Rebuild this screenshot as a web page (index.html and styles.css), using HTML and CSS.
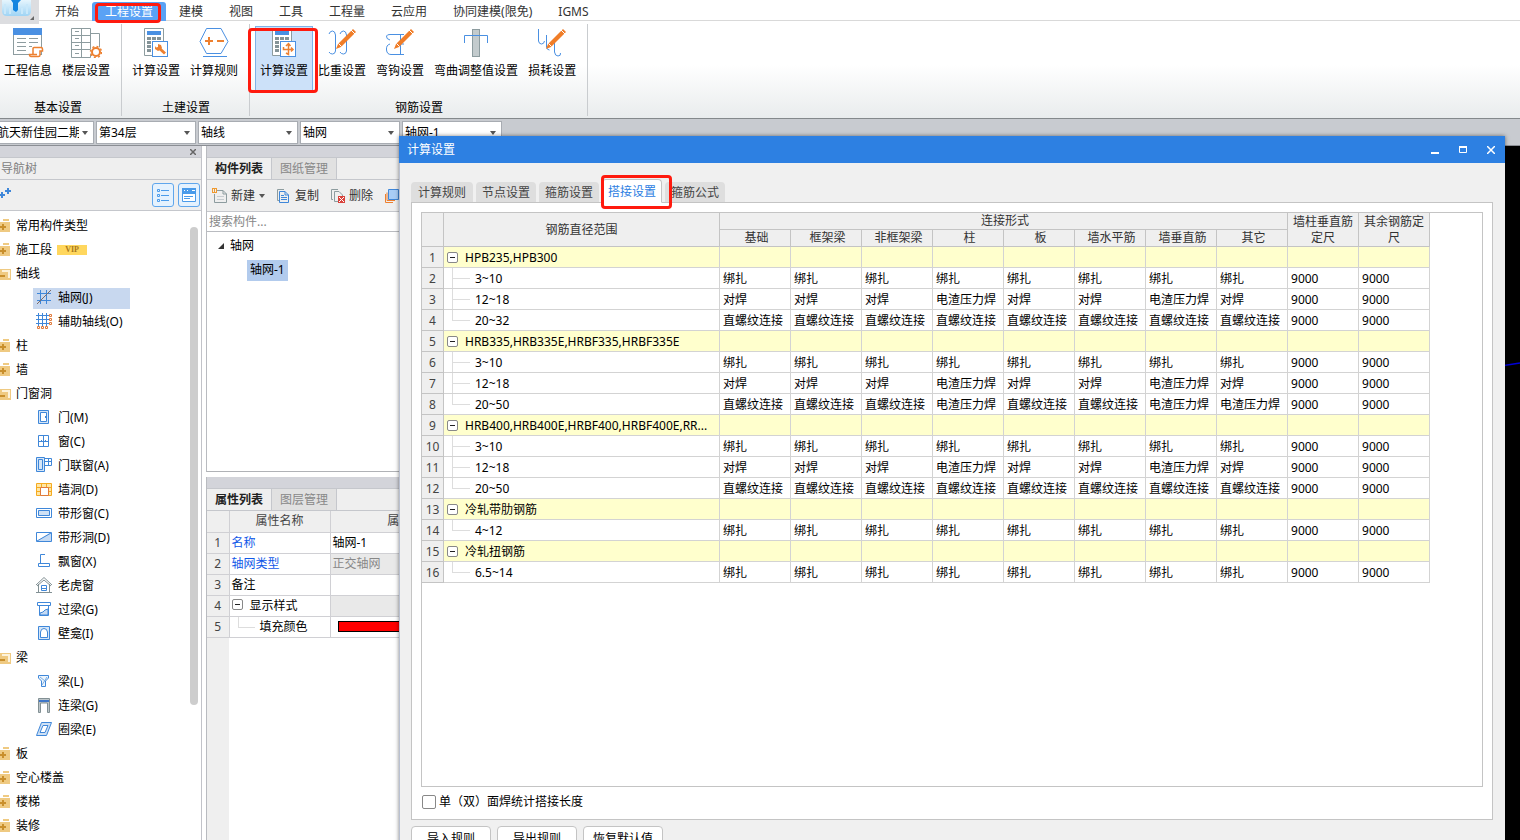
FILE: index.html
```html
<!DOCTYPE html>
<html lang="zh-CN">
<head>
<meta charset="utf-8">
<title>计算设置</title>
<link rel="stylesheet" href="styles.css">
</head>
<body>
<div class="app">
  <header class="menubar">
    <div class="logo">
      <svg width="39" height="24" viewBox="0 0 39 24"><defs><linearGradient id="lg" x1="0" y1="0" x2="0" y2="1"><stop offset="0" stop-color="#e6f5fd"/><stop offset="1" stop-color="#9fd4f5"/></linearGradient></defs><rect width="39" height="24" fill="#dcdde0"/><path d="M2 0H31V11Q31 16 26 16H7Q2 16 2 11Z" fill="url(#lg)"/><path d="M5 4V14M10 8V14M22 8V14M27 4V14" stroke="#c9e8fa" stroke-width="2"/><path d="M11 0H21L18 3V10L16 12L13 10V3Z" fill="#1485e0"/><path d="M34 16V20H30Z" fill="#666"/></svg>
    </div>
    <nav class="menu">
      <button class="menu-item">开始</button>
      <button class="menu-item is-active">工程设置<span class="mark mark-menu"></span></button>
      <button class="menu-item">建模</button>
      <button class="menu-item">视图</button>
      <button class="menu-item">工具</button>
      <button class="menu-item">工程量</button>
      <button class="menu-item">云应用</button>
      <button class="menu-item">协同建模(限免)</button>
      <button class="menu-item">IGMS</button>
    </nav>
  </header>

  <section class="ribbon">
    <div class="group group-first">
      <div class="tools">
        <button class="tool"><svg width="32" height="32" viewBox="0 0 32 32" fill="none"><rect x="1.500" y="2.500" width="28" height="26" fill="#fff" stroke="#8d9c9f"/><rect x="1" y="2" width="29" height="7" fill="#4a90e2"/><path d="M5 12.500H14M5 16.500H14M5 20.500H14M5 24.500H14M17 12.500H26M17 16.500H26M17 20.500H20" stroke="#8d9c9f"/><path d="M20.500 21.500H30.500V25H28V30.500H17.500V28H20.500Z" fill="#fff"/><path d="M21 29V22.500Q21 21.500 22 21.500H29Q30.500 21.500 30.500 23V25H28V29Q28 30.500 26.500 30.500H19Q17.500 30.500 17.500 28.500H25" stroke="#ed8030" stroke-width="1.500"/></svg>工程信息</button>
        <button class="tool"><svg width="32" height="32" viewBox="0 0 32 32" fill="none"><path d="M20.500 7.500H29.500V26.500H20.500" stroke="#8d9c9f" fill="#fff"/><path d="M1.500 2.500H20.500V31.500H1.500ZM1.500 9.500H20.500M1.500 16.500H20.500M1.500 23.500H20.500M11.500 2.500V31.500" stroke="#8d9c9f" fill="#fff"/><path d="M5 5.500H9M5 12.500H9M5 19.500H9M5 27.500H9" stroke="#8d9c9f"/><circle cx="26" cy="26" r="6" fill="#fff"/><circle cx="26" cy="26" r="4" stroke="#ed8030" stroke-width="2"/><circle cx="26" cy="26" r="5.500" stroke="#ed8030" stroke-width="1.500" stroke-dasharray="2 2.300"/></svg>楼层设置</button>
      </div>
      <div class="group-name">基本设置</div>
    </div>
    <div class="group">
      <div class="tools">
        <button class="tool"><svg width="32" height="32" viewBox="0 0 32 32" fill="none"><path d="M4.500 2.500H23.500V29.500H4.500Z" stroke="#8d9c9f" fill="#fff"/><path d="M7 5H21V9H7Z" fill="#4a90e2"/><path d="M7 12.500H21M7 16.500H21M7 20.500H14M7 24.500H11" stroke="#849397" stroke-width="3" stroke-dasharray="4 1"/><rect x="12.500" y="15.500" width="15" height="15" fill="#fff" stroke="#4a90e2"/><path d="M19 22L25 27.500" stroke="#ed8030" stroke-width="3"/><path d="M15 20V23L18 25L20 24L22 22L21 19L18 18V21L16 21.500Z" fill="#ed8030"/></svg>计算设置</button>
        <button class="tool"><svg width="32" height="32" viewBox="0 0 32 32" fill="none"><path d="M8.500 2.500H23L30 15.500L23 27.500H8.500L2 15.500ZM5 30.500H29" stroke="#4a90e2"/><path d="M7 15H15M11 11V19M19 15H26" stroke="#ed8030" stroke-width="2"/></svg>计算规则</button>
      </div>
      <div class="group-name">土建设置</div>
    </div>
    <div class="group">
      <div class="tools">
        <button class="tool is-selected"><svg width="32" height="32" viewBox="0 0 32 32" fill="none"><path d="M4.500 2.500H23.500V29.500H4.500Z" stroke="#8d9c9f" fill="#fff"/><path d="M7 5H21V9H7Z" fill="#4a90e2"/><path d="M7 12.500H21M7 16.500H21M7 20.500H14M7 24.500H11" stroke="#849397" stroke-width="3" stroke-dasharray="4 1"/><rect x="12.500" y="15.500" width="15" height="15" fill="#fff" stroke="#4a90e2"/><path d="M15.500 21V23.500H25M20.500 18V28.500L18 27M18 20L20.500 17.500L22.500 20M23 21.500L25 23.500L23 25.500" stroke="#ed8030" stroke-width="1.500"/></svg>计算设置<span class="mark mark-tool"></span></button>
        <button class="tool"><svg width="32" height="32" viewBox="0 0 32 32" fill="none"><path d="M3 8Q4 5 6.500 5T9.500 9V25Q9 28 6.500 28T3 26M14 8Q15 5 17.500 5T20.500 9V25Q20 28 17.500 28T14 26" stroke="#4a90e2"/><path d="M10 23L12 18L27 3L30 6L15 21Z" fill="#f07d28"/><path d="M25 4L29 8M12.500 17.500L15.500 20.500" stroke="#fff"/></svg>比重设置</button>
        <button class="tool"><svg width="32" height="32" viewBox="0 0 32 32" fill="none"><path d="M6 14Q2 13 2.500 10Q3 8.500 6 8.500H20M6 18Q2 19 2.500 24Q3 28.500 7 28.500H20M16.500 9V28M13 18H20" stroke="#4a90e2"/><path d="M10 23L12 18L27 3L30 6L15 21Z" fill="#f07d28"/><path d="M25 4L29 8M12.500 17.500L15.500 20.500" stroke="#fff"/></svg>弯钩设置</button>
        <button class="tool"><svg width="32" height="32" viewBox="0 0 32 32" fill="none"><rect x="12.500" y="3.500" width="7" height="27" fill="#c3cbcd" stroke="#8d9c9f"/><path d="M4.500 17V9.500H27.500V17" stroke="#4a90e2"/></svg>弯曲调整值设置</button>
        <button class="tool"><svg width="32" height="32" viewBox="0 0 32 32" fill="none"><path d="M2.500 3V15Q3 18 5.500 18T8.500 15M10.500 9V21Q11 24 13.500 24M18.500 13V26Q19 30 22 30T24.500 27" stroke="#4a90e2"/><path d="M10 23L12 18L27 3L30 6L15 21Z" fill="#f07d28"/><path d="M25 4L29 8M12.500 17.500L15.500 20.500" stroke="#fff"/></svg>损耗设置</button>
      </div>
      <div class="group-name">钢筋设置</div>
    </div>
  </section>

  <div class="combobar">
    <label class="combo"><select aria-label="工程"><option>航天新佳园二期</option></select></label>
    <label class="combo"><select aria-label="楼层"><option>第34层</option></select></label>
    <label class="combo"><select aria-label="类别"><option>轴线</option></select></label>
    <label class="combo"><select aria-label="类型"><option>轴网</option></select></label>
    <label class="combo"><select aria-label="构件"><option>轴网-1</option></select></label>
  </div>

  <main class="workspace">
    <aside class="nav-panel">
      <div class="grip"><button class="grip-close" aria-label="关闭"><svg width="6" height="6" viewBox="0 0 6 6"><path d="M0 0L6 6M6 0L0 6" stroke="#666" stroke-width="1.500"/></svg></button></div>
      <h2 class="nav-title">导航树</h2>
      <div class="nav-tools">
        <button class="plain" aria-label="添加"><svg width="12" height="12" viewBox="0 0 12 12"><path d="M0 8H5M2 5V11M5 4H11M8 1V7" stroke="#3f87d9" stroke-width="2"/></svg></button>
        <span class="spacer"></span>
        <button class="toggle" aria-label="列表"><svg width="16" height="16" viewBox="0 0 16 16" fill="none" stroke="#4a9bea"><path d="M2.500 2.500H4.500V4.500H2.500ZM2.500 7.500H4.500V9.500H2.500ZM2.500 12.500H4.500V14.500H2.500ZM6 3.500H14M6 8.500H14M6 13.500H14"/></svg></button>
        <button class="toggle" aria-label="面板"><svg width="16" height="16" viewBox="0 0 16 16" fill="none"><path d="M1.500 1.500H14.500V14.500H1.500Z" stroke="#4a9bea" fill="#fff"/><path d="M1 1H15V7H1Z" fill="#4a9bea"/><path d="M3 3.500H4M6 3.500H7M11 3.500H14" stroke="#fff"/><path d="M3 9.500H12M3 11.500H9" stroke="#4a9bea"/></svg></button>
      </div>
      <div class="nav-body">
        <ul class="nav-list">
          <li class="cat closed">常用构件类型</li>
          <li class="cat closed">施工段<span class="vip">VIP</span></li>
          <li class="cat open">轴线</li>
          <li class="leaf"><span class="leaf-box is-current"><svg class="ic" viewBox="0 0 16 16"><path d="M1 4.500H15M1 11.500H15M4.500 1V15M10.500 1V15" stroke="#3f87d9"/><path d="M1 15L15 1" stroke="#7d6a65"/></svg>轴网(J)</span></li>
          <li class="leaf"><span class="leaf-box"><svg class="ic" viewBox="0 0 16 16"><path d="M0 2.500H13M0 6.500H13M0 10.500H13M2.500 0V13M6.500 0V13M10.500 0V13" stroke="#3f87d9"/><path d="M13.500 1.500H15.500V3.500H13.500ZM13.500 5.500H15.500V7.500H13.500ZM13.500 9.500H15.500V11.500H13.500ZM1.500 13.500H3.500V15.500H1.500ZM5.500 13.500H7.500V15.500H5.500ZM9.500 13.500H11.500V15.500H9.500Z" stroke="#e07a3c"/></svg>辅助轴线(O)</span></li>
          <li class="cat closed">柱</li>
          <li class="cat closed">墙</li>
          <li class="cat open">门窗洞</li>
          <li class="leaf"><span class="leaf-box"><svg class="ic" viewBox="0 0 16 16"><path d="M2.500 1.500H12.500V14.500H2.500Z" stroke="#3f87d9" fill="#d5e6f8"/><path d="M4.500 3.500H10.500V12.500H4.500Z" stroke="#3f87d9" fill="#fff"/><path d="M9.500 7V9" stroke="#3f87d9"/></svg>门(M)</span></li>
          <li class="leaf"><span class="leaf-box"><svg class="ic" viewBox="0 0 16 16"><path d="M2.500 2.500H12.500V13.500H2.500ZM2.500 8.500H12.500M7.500 2.500V13.500M5 7.500H6M9 7.500H10" stroke="#3f87d9"/></svg>窗(C)</span></li>
          <li class="leaf"><span class="leaf-box"><svg class="ic" viewBox="0 0 16 16"><path d="M.5.500H8.500V14.500H.5Z" stroke="#3f87d9" fill="#d5e6f8"/><path d="M2.500 2.500H6.500V12.500H2.500ZM8.500 1.500H15.500V8.500H8.500ZM8.500 4.500H15.500M12.500 1.500V8.500" stroke="#3f87d9"/></svg>门联窗(A)</span></li>
          <li class="leaf"><span class="leaf-box"><svg class="ic" viewBox="0 0 16 16"><path d="M.5 2.500H15.500V14.500H.5ZM.5 6.500H15.500M.5 10.500H15.500M5.500 2.500V6M10.500 2.500V6" stroke="#f5ab20" fill="#ffe6a6"/><path d="M4.500 6.500H12.500V14.500H4.500Z" stroke="#e07a3c" fill="#fff"/></svg>墙洞(D)</span></li>
          <li class="leaf"><span class="leaf-box"><svg class="ic" viewBox="0 0 16 16"><path d="M.5 3.500H15.500V12.500H.5Z" stroke="#3f87d9"/><path d="M2.500 5.500H13.500V10.500H2.500Z" stroke="#3f87d9" fill="#cfe1f5"/></svg>带形窗(C)</span></li>
          <li class="leaf"><span class="leaf-box"><svg class="ic" viewBox="0 0 16 16"><path d="M15 3L1 12H15Z" fill="#c5daf3"/><path d="M.5 3.500H15.500V12.500H.5ZM15 4L1 12" stroke="#3f87d9"/></svg>带形洞(D)</span></li>
          <li class="leaf"><span class="leaf-box"><svg class="ic" viewBox="0 0 16 16"><path d="M9 1.500H4.500V10.500H13.500V13.500H2.500V10.500H5" stroke="#3f87d9"/></svg>飘窗(X)</span></li>
          <li class="leaf"><span class="leaf-box"><svg class="ic" viewBox="0 0 16 16"><path d="M0 8L8 0.500L16 8M2.500 7V15.500H13.500V7M1 9L8 3L15 9M0 15.500H16" stroke="#829094"/><path d="M5.500 8.500H10.500V13.500H5.500ZM5.500 11.500H10.500" stroke="#3f87d9"/></svg>老虎窗</span></li>
          <li class="leaf"><span class="leaf-box"><svg class="ic" viewBox="0 0 16 16"><path d="M1.500 1.500H14.500V4.500H1.500ZM3.500 4.500H12.500V14.500H3.500Z" stroke="#3f87d9"/><path d="M12 8L9 9L7 11L4 12V14H12Z" fill="#c5daf3" stroke="#3f87d9"/></svg>过梁(G)</span></li>
          <li class="leaf"><span class="leaf-box"><svg class="ic" viewBox="0 0 16 16"><path d="M2.500 1.500H13.500V14.500H2.500Z" stroke="#3f87d9" fill="#d5e6f8"/><path d="M4.500 12.500V7Q5 3.500 8 3.500T11.500 7V12.500Z" stroke="#3f87d9" fill="#fff"/></svg>壁龛(I)</span></li>
          <li class="cat open">梁</li>
          <li class="leaf"><span class="leaf-box"><svg class="ic" viewBox="0 0 16 16"><path d="M2.500 2.500H12.500V5L9.500 8V13.500H5.500V8L2.500 5Z" stroke="#3f87d9" fill="#edf5fc"/><path d="M4 4L9 8M11 4L6 12" stroke="#7aade4"/></svg>梁(L)</span></li>
          <li class="leaf"><span class="leaf-box"><svg class="ic" viewBox="0 0 16 16"><path d="M2.500 1.500H13.500V15.500H11.500V6H4.500V15.500H2.500Z" stroke="#829094" fill="#bdc6c9"/><path d="M3 3H13V5H3Z" fill="#3f77c9"/></svg>连梁(G)</span></li>
          <li class="leaf"><span class="leaf-box"><svg class="ic" viewBox="0 0 16 16"><path d="M5.500 1.500H15.500L10.500 14.500H.5Z" stroke="#3f87d9" fill="#cfe1f5"/><path d="M7 4.500H12L9 11.500H4Z" stroke="#3f87d9" fill="#fff"/></svg>圈梁(E)</span></li>
          <li class="cat closed">板</li>
          <li class="cat closed">空心楼盖</li>
          <li class="cat closed">楼梯</li>
          <li class="cat closed">装修</li>
        </ul>
        <div class="scroll-thumb"></div>
      </div>
    </aside>

    <div class="side">
      <section class="component-panel">
        <div class="grip"></div>
        <div class="tabs"><button class="tab is-active">构件列表</button><button class="tab">图纸管理</button></div>
        <div class="actions">
          <button class="plain action"><svg width="16" height="16" viewBox="0 0 16 16" fill="none"><path d="M4.500 2.500H11L14.500 6V14.500H2.500V6M11 2.500V6H14.500" stroke="#8d9c9f"/><path d="M5 8.500H12M5 11.500H12" stroke="#c6ccd0"/><path d="M0 .5H5M0 4.500H5M2.500 0V5M.5 0V5M4.500 0V5" stroke="#f09a30"/></svg>新建<i class="caret"></i></button>
          <button class="plain action"><svg width="16" height="16" viewBox="0 0 16 16" fill="none"><path d="M8 1.500H1.500V12.500H3" stroke="#8d9c9f"/><path d="M3.500 3.500H9L12.500 7V14.500H3.500ZM9 3.500V7H12.500M5 7.500H8M5 9.500H11M5 11.500H11" stroke="#3f87d9"/></svg>复制</button>
          <button class="plain action"><svg width="16" height="16" viewBox="0 0 16 16" fill="none"><path d="M8 1.500H1.500V11.500H3M8 13.500H4.500V3.500H9L12.500 7V8" stroke="#8d9c9f"/><path d="M8 8H15V15H8Z" fill="#d9423b"/><path d="M9 9L14 14M14 9L9 14" stroke="#fff"/></svg>删除</button>
          <button class="plain action" aria-label="层间复制"><svg width="16" height="16" viewBox="0 0 16 16" fill="none"><path d="M1.500 6V14.500H9M3 4.500V12.500H11" stroke="#ed8030"/><path d="M4.500 1.500H14.500V11.500H4.500Z" stroke="#3f87d9" fill="#a9cdf6"/></svg></button>
        </div>
        <input class="search" type="text" placeholder="搜索构件..." aria-label="搜索构件">
        <div class="comp-tree">
          <div class="comp-root"><svg width="8" height="8" viewBox="0 0 8 8"><path d="M7 1V7H1Z" fill="#333"/></svg>轴网</div>
          <div class="comp-child"><span class="comp-selected">轴网-1</span></div>
        </div>
      </section>

      <section class="property-panel">
        <div class="grip"></div>
        <div class="tabs"><button class="tab is-active">属性列表</button><button class="tab">图层管理</button></div>
        <div class="prop-body">
          <table class="props">
            <colgroup><col class="c-no"><col class="c-name"><col class="c-value"></colgroup>
            <tr><th></th><th>属性名称</th><th>属性值</th></tr>
            <tr><th>1</th><td class="link">名称</td><td>轴网-1</td></tr>
            <tr><th>2</th><td class="link">轴网类型</td><td class="readonly">正交轴网</td></tr>
            <tr><th>3</th><td>备注</td><td></td></tr>
            <tr><th>4</th><td><div class="fold-row"><button class="fold" aria-label="折叠"></button>显示样式</div></td><td class="readonly"></td></tr>
            <tr><th>5</th><td class="sub">填充颜色</td><td><div class="swatch"></div></td></tr>
          </table>
        </div>
      </section>
    </div>

    <div class="canvas"><svg class="axis" width="16" height="6" viewBox="0 0 16 6"><path d="M0 4.500L16 2" stroke="#0000d8" stroke-width="1.500"/></svg></div>
  </main>

  <section class="dialog" role="dialog" aria-label="计算设置">
    <div class="titlebar">
      <h1 class="title">计算设置</h1>
      <button class="winbtn" aria-label="最小化"><svg width="8" height="8" viewBox="0 0 8 8"><path d="M0 7H8" stroke="#fff" stroke-width="2"/></svg></button>
      <button class="winbtn" aria-label="最大化"><svg width="8" height="8" viewBox="0 0 8 8"><path d="M.5 1V6.500H7.500V1" stroke="#fff" fill="none"/><path d="M0 1H8" stroke="#fff" stroke-width="2"/></svg></button>
      <button class="winbtn" aria-label="关闭"><svg width="8" height="8" viewBox="0 0 8 8"><path d="M0 0L8 8M8 0L0 8" stroke="#fff" stroke-width="1.500"/></svg></button>
    </div>
    <div class="dialog-tabs">
      <button class="dtab">计算规则</button>
      <button class="dtab">节点设置</button>
      <button class="dtab">箍筋设置</button>
      <button class="dtab is-active">搭接设置<span class="mark mark-tab"></span></button>
      <button class="dtab">箍筋公式</button>
    </div>
    <div class="sheet">
      <div class="grid-area">
        <table class="grid">
          <colgroup><col class="g-no"><col class="g-range"><col span="10" class="g-cell"></colgroup>
          <thead>
            <tr><th rowspan="2"></th><th rowspan="2">钢筋直径范围</th><th colspan="8">连接形式</th><th rowspan="2">墙柱垂直筋定尺</th><th rowspan="2">其余钢筋定尺</th></tr>
            <tr><th>基础</th><th>框架梁</th><th>非框架梁</th><th>柱</th><th>板</th><th>墙水平筋</th><th>墙垂直筋</th><th>其它</th></tr>
          </thead>
          <tbody>
            <tr class="head"><th>1</th><td><div class="fold-row"><button class="fold" aria-label="折叠"></button>HPB235,HPB300</div></td><td></td><td></td><td></td><td></td><td></td><td></td><td></td><td></td><td></td><td></td></tr>
            <tr><th>2</th><td class="branch">3~10</td><td>绑扎</td><td>绑扎</td><td>绑扎</td><td>绑扎</td><td>绑扎</td><td>绑扎</td><td>绑扎</td><td>绑扎</td><td>9000</td><td>9000</td></tr>
            <tr><th>3</th><td class="branch">12~18</td><td>对焊</td><td>对焊</td><td>对焊</td><td>电渣压力焊</td><td>对焊</td><td>对焊</td><td>电渣压力焊</td><td>对焊</td><td>9000</td><td>9000</td></tr>
            <tr><th>4</th><td class="branch end">20~32</td><td>直螺纹连接</td><td>直螺纹连接</td><td>直螺纹连接</td><td>直螺纹连接</td><td>直螺纹连接</td><td>直螺纹连接</td><td>直螺纹连接</td><td>直螺纹连接</td><td>9000</td><td>9000</td></tr>
            <tr class="head"><th>5</th><td><div class="fold-row"><button class="fold" aria-label="折叠"></button>HRB335,HRB335E,HRBF335,HRBF335E</div></td><td></td><td></td><td></td><td></td><td></td><td></td><td></td><td></td><td></td><td></td></tr>
            <tr><th>6</th><td class="branch">3~10</td><td>绑扎</td><td>绑扎</td><td>绑扎</td><td>绑扎</td><td>绑扎</td><td>绑扎</td><td>绑扎</td><td>绑扎</td><td>9000</td><td>9000</td></tr>
            <tr><th>7</th><td class="branch">12~18</td><td>对焊</td><td>对焊</td><td>对焊</td><td>电渣压力焊</td><td>对焊</td><td>对焊</td><td>电渣压力焊</td><td>对焊</td><td>9000</td><td>9000</td></tr>
            <tr><th>8</th><td class="branch end">20~50</td><td>直螺纹连接</td><td>直螺纹连接</td><td>直螺纹连接</td><td>电渣压力焊</td><td>直螺纹连接</td><td>直螺纹连接</td><td>电渣压力焊</td><td>电渣压力焊</td><td>9000</td><td>9000</td></tr>
            <tr class="head"><th>9</th><td><div class="fold-row"><button class="fold" aria-label="折叠"></button>HRB400,HRB400E,HRBF400,HRBF400E,RR...</div></td><td></td><td></td><td></td><td></td><td></td><td></td><td></td><td></td><td></td><td></td></tr>
            <tr><th>10</th><td class="branch">3~10</td><td>绑扎</td><td>绑扎</td><td>绑扎</td><td>绑扎</td><td>绑扎</td><td>绑扎</td><td>绑扎</td><td>绑扎</td><td>9000</td><td>9000</td></tr>
            <tr><th>11</th><td class="branch">12~18</td><td>对焊</td><td>对焊</td><td>对焊</td><td>电渣压力焊</td><td>对焊</td><td>对焊</td><td>电渣压力焊</td><td>对焊</td><td>9000</td><td>9000</td></tr>
            <tr><th>12</th><td class="branch end">20~50</td><td>直螺纹连接</td><td>直螺纹连接</td><td>直螺纹连接</td><td>直螺纹连接</td><td>直螺纹连接</td><td>直螺纹连接</td><td>直螺纹连接</td><td>直螺纹连接</td><td>9000</td><td>9000</td></tr>
            <tr class="head"><th>13</th><td><div class="fold-row"><button class="fold" aria-label="折叠"></button>冷轧带肋钢筋</div></td><td></td><td></td><td></td><td></td><td></td><td></td><td></td><td></td><td></td><td></td></tr>
            <tr><th>14</th><td class="branch end">4~12</td><td>绑扎</td><td>绑扎</td><td>绑扎</td><td>绑扎</td><td>绑扎</td><td>绑扎</td><td>绑扎</td><td>绑扎</td><td>9000</td><td>9000</td></tr>
            <tr class="head"><th>15</th><td><div class="fold-row"><button class="fold" aria-label="折叠"></button>冷轧扭钢筋</div></td><td></td><td></td><td></td><td></td><td></td><td></td><td></td><td></td><td></td><td></td></tr>
            <tr><th>16</th><td class="branch end">6.5~14</td><td>绑扎</td><td>绑扎</td><td>绑扎</td><td>绑扎</td><td>绑扎</td><td>绑扎</td><td>绑扎</td><td>绑扎</td><td>9000</td><td>9000</td></tr>
          </tbody>
        </table>
      </div>
      <label class="check"><input type="checkbox">单（双）面焊统计搭接长度</label>
    </div>
    <div class="dialog-buttons">
      <button class="push">导入规则</button>
      <button class="push">导出规则</button>
      <button class="push">恢复默认值</button>
    </div>
  </section>
</div>
</body>
</html>
```
FILE: styles.css
```css
* { box-sizing: border-box; }

body {
  margin: 0;
  font: 12px/16px "Noto Sans", "Noto Sans CJK SC", sans-serif;
  color: #000;
}

button, input, select { font: inherit; color: inherit; }

button {
  margin: 0;
  padding: 0;
  border: 0;
  background: none;
  white-space: nowrap;
}

h1, h2 { margin: 0; font: inherit; }

.app {
  position: relative;
  display: flex;
  flex-direction: column;
  height: 100vh;
  overflow: hidden;
  background: #fff;
}

/* red callout frames */
.mark {
  position: absolute;
  z-index: 5;
  border: 3px solid #ff1a0e;
  border-radius: 4px;
  pointer-events: none;
}
.mark-menu { inset: 1px 5px -2px 3px; }
.mark-tool { inset: 2px -5px -1px -7px; }
.mark-tab { inset: -5px -11px -7px -2px; }

/* menu */
.menubar {
  display: flex;
  flex: none;
  height: 21px;
  border-bottom: 1px solid #d9d9d9;
  color: #333;
}
.logo { width: 42px; height: 24px; position: relative; z-index: 1; }
.logo svg { display: block; }
.menu { display: flex; padding-top: 2px; }
.menu-item {
  position: relative;
  height: 19px;
  padding: 1px 13px 0;
  border-radius: 3px 3px 0 0;
}
.menu-item.is-active { background: #5aa2f5; color: #fff; }

/* ribbon */
.ribbon {
  display: flex;
  flex: none;
  height: 98px;
  padding: 3px 0 2px;
  background: linear-gradient(#fff 45%, #e9eced);
  border-bottom: 1px solid #84898c;
}
.group {
  display: flex;
  flex-direction: column;
  justify-content: space-between;
  padding: 2px 6px 0 5px;
  border-right: 1px solid #c9cccf;
}
.group-first { margin-left: -1px; padding-left: 0; }
.tools { display: flex; }
.tool {
  position: relative;
  display: flex;
  flex-direction: column;
  align-items: center;
  gap: 5px;
  height: 66px;
  padding: 0 5px;
}
.tool svg { display: block; }
.tool.is-selected {
  background: #cce1f9;
  box-shadow: inset 1px 0 #7fb2e8, inset -1px 0 #7fb2e8, inset 0 1px #7fb2e8;
}
.group-name { padding-left: 2px; text-align: center; }

/* combo row */
.combobar {
  display: flex;
  flex: none;
  gap: 2px;
  height: 27px;
  margin-left: -6px;
  padding: 2px 0 1px;
  background: #c8cbd0;
  border-bottom: 1px solid #8b8e94;
}
.combo { position: relative; width: 100px; }
.combo select {
  display: block;
  width: 100%;
  height: 23px;
  padding: 0 14px 0 2px;
  border: 1px solid #a8acb2;
  border-radius: 0;
  background: #fff;
  appearance: none;
}
.combo::after {
  content: "";
  position: absolute;
  right: 6px;
  top: 10px;
  border: 3px solid transparent;
  border-top: 4px solid #555;
  border-bottom: 0;
}

.workspace { display: flex; flex: 1; min-height: 0; }

.grip {
  display: flex;
  justify-content: flex-end;
  flex: none;
  height: 12px;
  background: #d3d4da;
  border-bottom: 1px solid #c5c7cc;
}
.grip-close { display: flex; align-items: center; margin-right: 5px; }

/* navigation tree */
.nav-panel {
  display: flex;
  flex-direction: column;
  width: 202px;
  border-right: 1px solid #c2c3c9;
}
.nav-title {
  height: 22px;
  padding: 3px 1px;
  background: #efefef;
  border-bottom: 1px solid #c5c7cc;
  color: #808080;
}
.nav-tools {
  display: flex;
  align-items: center;
  gap: 4px;
  height: 31px;
  padding-right: 1px;
  background: #efefef;
  border-bottom: 1px solid #c5c7cc;
}
.spacer { flex: 1; }
.toggle {
  display: flex;
  align-items: center;
  justify-content: center;
  width: 22px;
  height: 24px;
  border: 1px solid #5fa6ec;
  border-radius: 3px;
  background: #e5f2fe;
}
.nav-body { position: relative; flex: 1; min-height: 0; overflow: hidden; }
.nav-list { margin: 0; padding: 3px 0 0; list-style: none; }
.nav-list li { height: 24px; }
.cat { display: flex; align-items: center; }
/* folder: plus or minus sign over the body, with a tab above it */
.cat::before {
  content: "";
  width: 10px;
  height: 13px;
  margin: 0 6px 2px 0;
  background:
    linear-gradient(#c98f2c, #c98f2c) 0 7px / 6px 2px,
    linear-gradient(#c98f2c, #c98f2c) 2px 5px / 2px 6px,
    linear-gradient(#efca82, #efca82) 0 3px / 10px 10px,
    linear-gradient(#efca82, #efca82) 3px 0 / 6px 2px;
  background-repeat: no-repeat;
}
.cat.open::before {
  width: 11px;
  margin-right: 5px;
  background:
    linear-gradient(#c98f2c, #c98f2c) 0 8px / 5px 2px,
    linear-gradient(#efca82, #efca82) 0 5px / 8px 8px,
    linear-gradient(#fdf3dc, #fdf3dc) 2px 3px / 8px 8px,
    linear-gradient(#efca82, #efca82) 0 2px / 11px 11px;
  background-repeat: no-repeat;
}
.vip {
  width: 30px;
  height: 10px;
  margin-left: 5px;
  background: #ffd75e;
  color: #a9781c;
  font: bold 8px/10px "Liberation Serif", serif;
  text-align: center;
}
.leaf { display: flex; align-items: center; padding-left: 33px; }
.leaf-box {
  display: flex;
  align-items: center;
  gap: 6px;
  height: 21px;
  padding-left: 3px;
}
.leaf-box.is-current { width: 97px; background: #c8d8ef; }
.ic { width: 16px; height: 16px; margin-bottom: 2px; fill: none; }
.scroll-thumb {
  position: absolute;
  top: 16px;
  right: 3px;
  width: 8px;
  height: 478px;
  border-radius: 4px;
  background: #cdcdcd;
}

/* component and property panels */
.side {
  display: flex;
  flex-direction: column;
  gap: 5px;
  width: 197px;
  padding-left: 4px;
}
.component-panel {
  display: flex;
  flex-direction: column;
  height: 326px;
  border-left: 1px solid #b9bbc0;
  border-bottom: 1px solid #b0b2b6;
}
.tabs {
  display: flex;
  flex: none;
  height: 22px;
  background: #efefef;
  border-bottom: 1px solid #c5c7cc;
}
.tab {
  width: 65px;
  padding-top: 1px;
  border-right: 1px solid #c5c7cc;
  background: #e1e1e1;
  color: #888;
}
.tab.is-active { background: #efefef; color: #222; font-weight: bold; }
.actions {
  display: flex;
  align-items: center;
  flex: none;
  gap: 11px;
  height: 32px;
  padding: 1px 0 0 5px;
  overflow: hidden;
  background: #efefef;
  border-bottom: 1px solid #c5c7cc;
  color: #333;
}
.action { display: flex; align-items: center; gap: 3px; }
.action svg { flex: none; }
.caret {
  margin-left: 1px;
  border: 3px solid transparent;
  border-top: 4px solid #555;
  border-bottom: 0;
}
.search {
  flex: none;
  height: 20px;
  padding: 0 2px;
  border: 0;
  border-bottom: 1px solid #b9bbc0;
  border-radius: 0;
  background: #fff;
}
.search::placeholder { color: #888; opacity: 1; }
.comp-tree { padding: 2px 0 0 10px; }
.comp-root { display: flex; align-items: center; gap: 5px; height: 24px; }
.comp-child { display: flex; align-items: center; height: 24px; padding-left: 30px; }
.comp-selected { height: 21px; padding: 2px 3px; background: #b2cbed; }

.property-panel {
  display: flex;
  flex-direction: column;
  flex: 1;
  min-height: 0;
  border-left: 1px solid #b9bbc0;
}
.prop-body {
  flex: 1;
  background: linear-gradient(90deg, #efefef 22px, #fff 22px);
  overflow: hidden;
}
.props { width: 274px; }
.props, .grid { table-layout: fixed; border-collapse: collapse; }
.props th, .props td { height: 21px; border: solid #d0d0d4; border-width: 0 1px 1px 0; padding: 0 2px; }
.props th { background: #efefef; color: #444; font-weight: normal; }
.props td { text-align: left; background: #fff; white-space: nowrap; }
.c-no { width: 22px; }
.c-name { width: 101px; }
.props .link { color: #1259e8; }
.props .readonly { background: #e9e9e9; color: #888; }
.fold-row { display: flex; align-items: center; gap: 7px; }
.fold {
  display: flex;
  align-items: center;
  justify-content: center;
  width: 11px;
  height: 11px;
  margin-bottom: 2px;
  border: 1px solid #888;
  border-radius: 2px;
  background: #fff;
}
.fold::before { content: ""; width: 5px; height: 1px; background: #222; }
.props .sub { position: relative; padding-left: 30px; }
.sub::before {
  content: "";
  position: absolute;
  left: 8px;
  top: 0;
  width: 16px;
  height: 10px;
  border: solid #ddd;
  border-width: 0 0 1px 1px;
}
.swatch { height: 11px; margin-left: 5px; border: 1px solid #000; background: #f00; }

.canvas { position: relative; flex: 1; background: #000; }
.axis { position: absolute; right: 0; top: 215px; }

/* dialog window */
.dialog {
  position: absolute;
  top: 136px;
  right: 15px;
  bottom: -32px;
  left: 399px;
  display: flex;
  flex-direction: column;
  padding: 0 12px 20px;
  background: #f0f0f0;
  border-left: 1px solid #b9c0d0;
  box-shadow: 0 0 4px rgba(0, 0, 0, .5);
}
.titlebar {
  display: flex;
  align-items: center;
  flex: none;
  gap: 12px;
  height: 27px;
  margin: 0 -12px 15px -13px;
  padding: 0 6px 0 8px;
  background: #2d80e2;
  color: #fff;
}
.title { flex: 1; }
.winbtn { display: flex; align-items: center; justify-content: center; width: 16px; height: 16px; }
.dialog-tabs { display: flex; align-items: flex-end; flex: none; gap: 3px; height: 25px; margin-left: -1px; }
.dtab {
  position: relative;
  height: 21px;
  padding: 1px 6px 0;
  border-bottom: 1px solid #c4c4c4;
  border-radius: 4px 4px 0 0;
  background: #dedede;
  color: #444;
}
.dtab:first-child { padding: 1px 7px 0; }
.dtab.is-active {
  z-index: 1;
  height: 24px;
  padding: 1px 5px 0;
  border: 1px solid #c4c4c4;
  border-bottom-color: #fff;
  background: #fff;
  color: #2d80e2;
}
.sheet {
  display: flex;
  flex-direction: column;
  flex: 1;
  min-height: 0;
  margin: -1px 0 0 -1px;
  padding: 9px;
  background: #fff;
  border: 1px solid #c4c4c4;
}
.grid-area { flex: 1; min-height: 0; border: 1px solid #c4c4c4; overflow: hidden; }
.grid { width: 1008px; margin: -1px 0 0 -1px; }
.g-no { width: 22px; }
.g-range { width: 276px; }
.g-cell { width: 71px; }
.grid th, .grid td { height: 21px; padding: 2px 3px 0; border: 1px solid #d3d3d3; }
.grid th { background: #efefef; border-color: #c4c4c4; color: #444; font-weight: normal; }
.grid thead th { height: 17px; padding: 0 0 0 3px; line-height: 16px; color: #333; }
.grid thead th[rowspan] { padding: 1px 4px 0; }
.grid td { white-space: nowrap; overflow: hidden; }
.grid .head td { background: #ffffcd; }
.grid .branch { position: relative; padding-left: 31px; }
.branch::before {
  content: "";
  position: absolute;
  left: 8px;
  top: 0;
  width: 17px;
  height: 10px;
  border: solid #ddd;
  border-width: 0 0 1px 1px;
}
.branch::after {
  content: "";
  position: absolute;
  left: 8px;
  top: 10px;
  bottom: 0;
  border-left: 1px solid #ddd;
}
.branch.end::after { display: none; }
.check { display: flex; align-items: center; gap: 3px; height: 30px; margin-bottom: -7px; }
.check input {
  appearance: none;
  width: 14px;
  height: 14px;
  margin: 0 0 0 1px;
  border: 1px solid #888;
  border-radius: 2px;
  background: #fff;
}
.dialog-buttons { display: flex; flex: none; gap: 6px; margin: 6px 0 0 -1px; }
.push {
  width: 80px;
  height: 26px;
  border: 1px solid #c4c4c4;
  border-radius: 4px;
  background: #fff;
}
```
